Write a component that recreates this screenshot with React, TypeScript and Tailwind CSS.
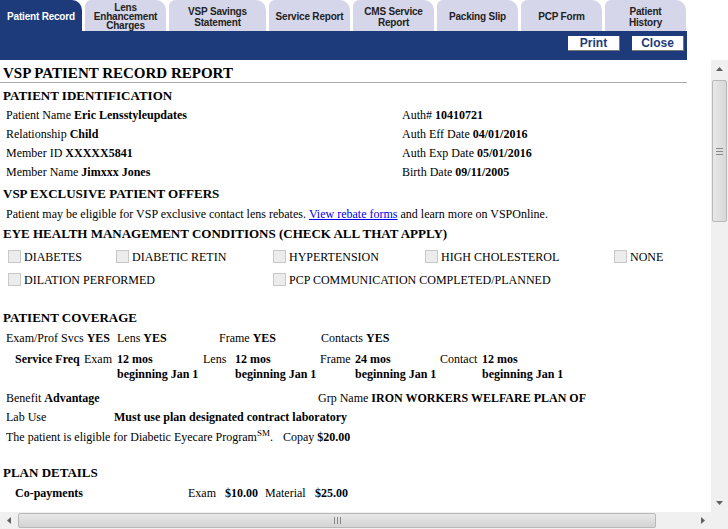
import React from "react";

const tabs = [
  { label: ["Patient Record"], w: "w-[82px]", active: true },
  { label: ["Lens", "Enhancement", "Charges"], w: "w-[81px]", tight: true },
  { label: ["VSP Savings", "Statement"], w: "w-[97px]" },
  { label: ["Service Report"], w: "w-[81px]" },
  { label: ["CMS Service", "Report"], w: "w-[81px]" },
  { label: ["Packing Slip"], w: "w-[81px]" },
  { label: ["PCP Form"], w: "w-[81px]" },
  { label: ["Patient", "History"], w: "w-[81px]" },
];

const serif = "font-['Liberation_Serif','Times_New_Roman',serif]";
const sans = "font-['Liberation_Sans',Arial,sans-serif]";

const Box = () => (
  <span className="inline-block w-[13px] h-[13px] border border-[#c8c8c8] bg-[#ececec] mr-[3px] align-[-2px]" />
);

const Section = ({ children, className }: { children: React.ReactNode; className: string }) => (
  <div className={`text-[13px] font-bold leading-[15px] h-[15px] ${className}`}>{children}</div>
);

const Row = ({ children, className = "" }: { children: React.ReactNode; className?: string }) => (
  <div className={`flex h-[19px] items-center pl-[3px] whitespace-nowrap ${className}`}>{children}</div>
);

const Arrow = ({ dir }: { dir: "up" | "down" | "left" | "right" }) => {
  const pts = {
    up: "0,5 7,5 3.5,1",
    down: "0,1 7,1 3.5,5",
    left: "5,0 5,7 1,3.5",
    right: "1,0 1,7 5,3.5",
  }[dir];
  const vertical = dir === "up" || dir === "down";
  return (
    <svg width={vertical ? 7 : 6} height={vertical ? 6 : 7} viewBox={vertical ? "0 0 7 6" : "0 0 6 7"}>
      <polygon points={pts} fill="#606060" />
    </svg>
  );
};

const App = () => {
  return (
    <div className="w-[728px] h-[529px] overflow-hidden bg-white flex flex-col">
      {/* tabs */}
      <div className={`flex gap-[3px] h-[31px] w-[687px] ${sans}`}>
        {tabs.map((t) => (
          <div
            key={t.label.join(" ")}
            className={`${t.w} h-full flex flex-col items-center justify-center pt-[2px] text-center text-[10px] tracking-[-0.2px] font-bold ${
              t.tight ? "leading-[9px]" : "leading-[11px]"
            } ${
              t.active
                ? "bg-[#1d3a7a] text-white rounded-tr-[10px]"
                : "bg-[#d6d6ea] text-[#222] rounded-tl-[6px] rounded-tr-[10px]"
            }`}
          >
            {t.label.map((l) => (
              <span key={l}>{l}</span>
            ))}
          </div>
        ))}
      </div>
      <div className={`w-[687px] h-[29px] bg-[#1d3a7a] flex items-start justify-end gap-[12px] pt-[5px] pr-[3px] ${sans}`}>
        {["Print", "Close"].map((b) => (
          <button
            key={b}
            className="w-[52px] h-[15px] bg-white text-[#1d3a7a] text-[12px] font-bold leading-[13px] border-b border-r border-[#777]"
          >
            {b}
          </button>
        ))}
      </div>

      <div className="flex h-[452px]">
        <div className={`w-[711px] h-full overflow-hidden text-[12px] text-black ${serif}`}>
          <div className="w-[687px] border-b border-[#aaa] pl-[3px] mt-[5px] text-[15px] font-bold leading-[17px]">
            VSP PATIENT RECORD REPORT
          </div>
          <div className="pl-[3px]">
            <Section className="mt-[5px]">PATIENT IDENTIFICATION</Section>
            <div className="mt-[2px] grid grid-cols-[396px_1fr]">
              <Row>Patient Name&nbsp;<b>Eric Lensstyleupdates</b></Row>
              <Row>Auth#&nbsp;<b>10410721</b></Row>
              <Row>Relationship&nbsp;<b>Child</b></Row>
              <Row>Auth Eff Date&nbsp;<b>04/01/2016</b></Row>
              <Row>Member ID&nbsp;<b>XXXXX5841</b></Row>
              <Row>Auth Exp Date&nbsp;<b>05/01/2016</b></Row>
              <Row>Member Name&nbsp;<b>Jimxxx Jones</b></Row>
              <Row>Birth Date&nbsp;<b>09/11/2005</b></Row>
            </div>

            <Section className="mt-[5px]">VSP EXCLUSIVE PATIENT OFFERS</Section>
            <Row className="mt-[3px]">
              Patient may be eligible for VSP exclusive contact lens rebates.&nbsp;
              <a className="text-[#0000ee] underline">View rebate forms</a>&nbsp;and learn more on VSPOnline.
            </Row>

            <Section className="mt-[3px]">EYE HEALTH MANAGEMENT CONDITIONS (CHECK ALL THAT APPLY)</Section>
            <div className="mt-[4px] pl-[5px] whitespace-nowrap">
              <div className="flex h-[23px] items-center">
                <span className="w-[108px]"><Box />DIABETES</span>
                <span className="w-[157px]"><Box />DIABETIC RETIN</span>
                <span className="w-[152px]"><Box />HYPERTENSION</span>
                <span className="w-[189px]"><Box />HIGH CHOLESTEROL</span>
                <span><Box />NONE</span>
              </div>
              <div className="flex h-[23px] items-center">
                <span className="w-[265px]"><Box />DILATION PERFORMED</span>
                <span><Box />PCP COMMUNICATION COMPLETED/PLANNED</span>
              </div>
            </div>

            <Section className="mt-[19px]">PATIENT COVERAGE</Section>
            <Row className="mt-[3px]">
              <span className="w-[111px]">Exam/Prof Svcs <b>YES</b></span>
              <span className="w-[102px]">Lens <b>YES</b></span>
              <span className="w-[102px]">Frame <b>YES</b></span>
              <span>Contacts <b>YES</b></span>
            </Row>
            <div className="mt-[5px] flex pl-[12px] leading-[15px] whitespace-nowrap">
              <b className="w-[69px]">Service Freq</b>
              <span className="w-[33px]">Exam</span>
              <b className="w-[86px]">12 mos<br />beginning Jan 1</b>
              <span className="w-[32px]">Lens</span>
              <b className="w-[85px]">12 mos<br />beginning Jan 1</b>
              <span className="w-[35px]">Frame</span>
              <b className="w-[85px]">24 mos<br />beginning Jan 1</b>
              <span className="w-[42px]">Contact</span>
              <b>12 mos<br />beginning Jan 1</b>
            </div>
            <Row className="mt-[6px]">
              <span className="w-[312px]">Benefit <b>Advantage</b></span>
              <span>Grp Name <b>IRON WORKERS WELFARE PLAN OF</b></span>
            </Row>
            <Row>
              <span className="w-[108px]">Lab Use</span>
              <b>Must use plan designated contract laboratory</b>
            </Row>
            <Row className="mt-[1px]">
              <span className="w-[277px]">
                The patient is eligible for Diabetic Eyecare Program<sup className="text-[9px]">SM</sup>.
              </span>
              <span>Copay <b>$20.00</b></span>
            </Row>

            <Section className="mt-[19px]">PLAN DETAILS</Section>
            <Row className="mt-[3px]">
              <b className="w-[182px] pl-[9px]">Co-payments</b>
              <span className="w-[37px]">Exam</span>
              <b className="w-[40px]">$10.00</b>
              <span className="w-[50px]">Material</span>
              <b>$25.00</b>
            </Row>
          </div>
        </div>

        {/* vertical scrollbar */}
        <div className="w-[17px] h-full bg-[#f0f0f0] flex flex-col items-center">
          <div className="h-[18px] flex items-center justify-center"><Arrow dir="up" /></div>
          <div className="w-[15px] h-[142px] mt-[2px] rounded-[2px] border border-[#b8b8b8] bg-gradient-to-r from-[#e8e8e8] to-[#d8d8d8] flex items-center justify-center">
            <div className="flex flex-col gap-[2px]">
              <span className="block w-[7px] h-px bg-[#888]" />
              <span className="block w-[7px] h-px bg-[#888]" />
              <span className="block w-[7px] h-px bg-[#888]" />
            </div>
          </div>
          <div className="flex-1" />
          <div className="h-[18px] flex items-center justify-center"><Arrow dir="down" /></div>
        </div>
      </div>

      {/* horizontal scrollbar */}
      <div className="flex h-[17px]">
        <div className="w-[711px] h-full bg-[#f0f0f0] flex items-center">
          <div className="w-[17px] flex items-center justify-center"><Arrow dir="left" /></div>
          <div className="w-[638px] h-[15px] ml-[1px] rounded-[2px] border border-[#b8b8b8] bg-gradient-to-b from-[#e8e8e8] to-[#d4d4d4] flex items-center justify-center">
            <div className="flex gap-[2px]">
              <span className="block w-px h-[7px] bg-[#888]" />
              <span className="block w-px h-[7px] bg-[#888]" />
              <span className="block w-px h-[7px] bg-[#888]" />
            </div>
          </div>
          <div className="flex-1" />
          <div className="w-[17px] flex items-center justify-center"><Arrow dir="right" /></div>
        </div>
        <div className="w-[17px] h-full bg-[#f0f0f0]" />
      </div>
    </div>
  );
};

export default App;
